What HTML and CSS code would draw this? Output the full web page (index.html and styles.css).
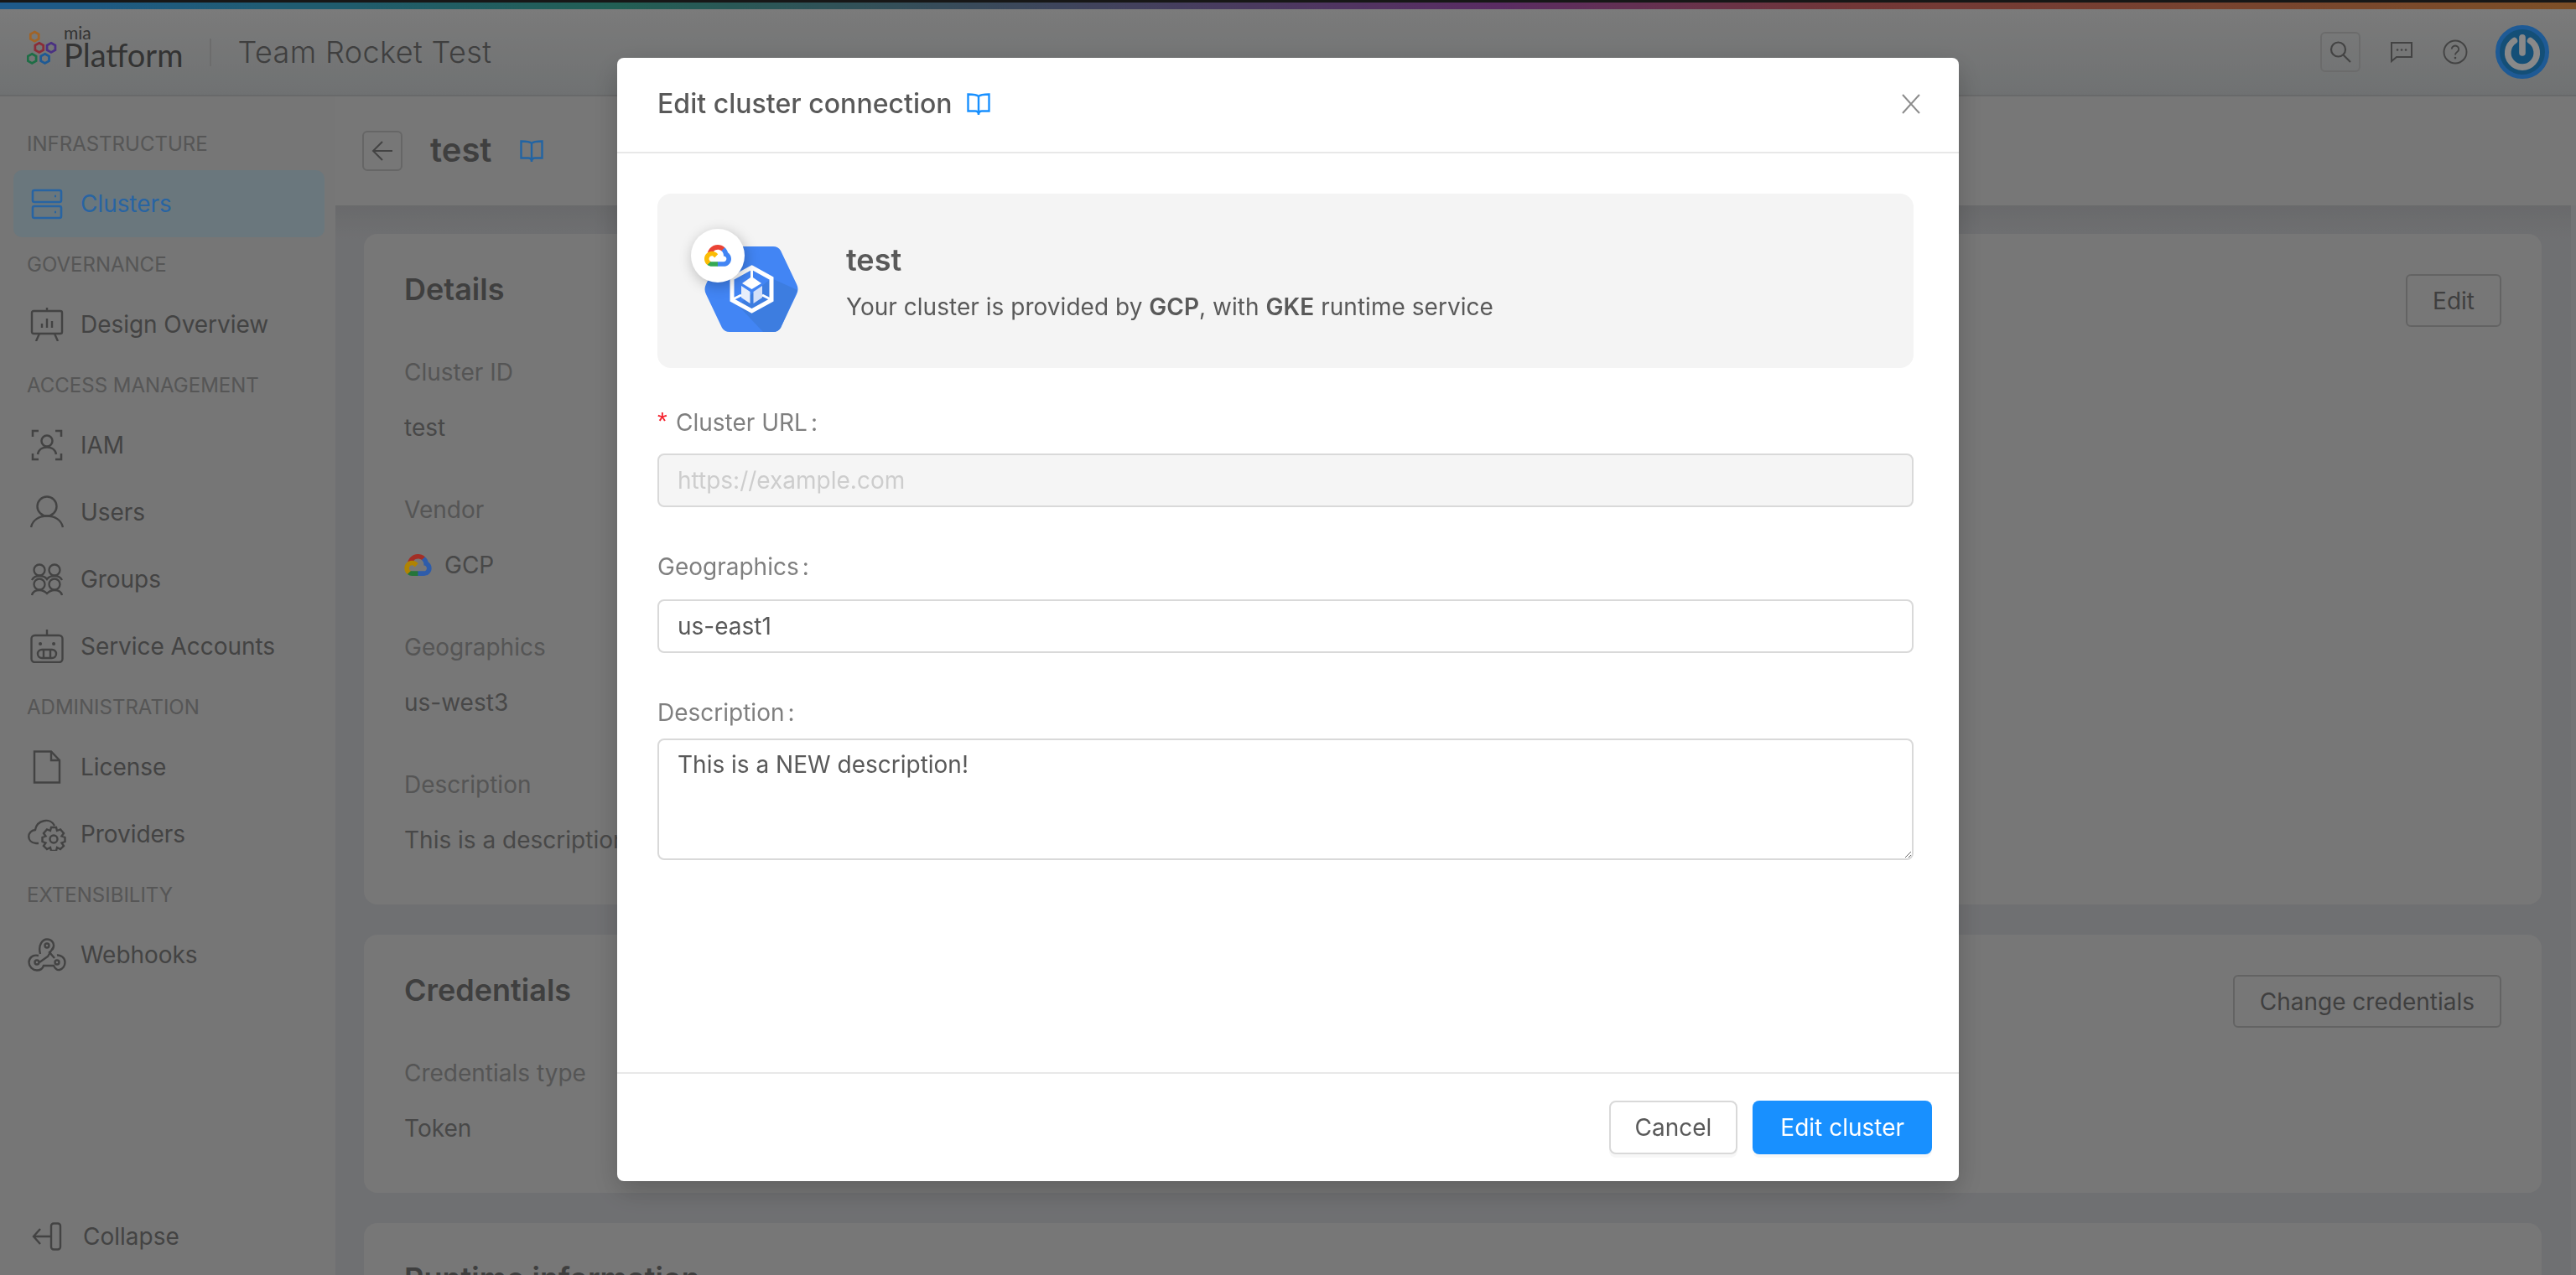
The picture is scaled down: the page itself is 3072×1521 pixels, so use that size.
FILE: index.html
```html
<!DOCTYPE html>
<html lang="en">
<head>
  <meta charset="UTF-8" />
  <title>Edit cluster connection</title>
  <link rel="stylesheet" href="styles.css">
</head>
<body>

  <div class="rainbow"></div>

  <!-- Top bar -->
  <header class="topbar">
    <div class="brand">
      <svg class="brand-hex" width="37" height="43" viewBox="0 0 60 66" fill="none" stroke-width="4.500">
        <path d="M15 1.500 L23 6 V15 L15 19.500 L7 15 V6 Z" stroke="#e58f39"/>
        <path d="M24 23 L32 27.500 V36.500 L24 41 L16 36.500 V27.500 Z" stroke="#c8404f"/>
        <path d="M47 23 L55 27.500 V36.500 L47 41 L39 36.500 V27.500 Z" stroke="#6b47ba"/>
        <path d="M10 44 L18 48.500 V57.500 L10 62 L2 57.500 V48.500 Z" stroke="#2b9d64"/>
        <path d="M35 44 L43 48.500 V57.500 L35 62 L27 57.500 V48.500 Z" stroke="#2b81d6"/>
      </svg>
      <div class="brand-name">
        <span class="brand-mia">mia</span>
        <span class="brand-platform">Platform</span>
      </div>
    </div>
    <span class="brand-sep"></span>
    <span class="company">Team Rocket Test</span>
    <div class="topbar-right">
      <button class="icon-btn">
        <svg width="28" height="28" viewBox="0 0 28 28" fill="none" stroke="#616161" stroke-width="2.200"><circle cx="11.500" cy="11" r="8.500"/><path d="M17.500 17.500 L26 26"/></svg>
      </button>
      <svg class="chat-ic" width="28" height="26" viewBox="0 0 28 26" fill="none" stroke="#616161" stroke-width="2"><path d="M2 2 H26 V19 H8 L2 24 Z"/><path d="M9 10.500 h.1 M14 10.500 h.1 M19 10.500 h.1" stroke-width="2.600" stroke-linecap="round"/></svg>
      <svg class="help-ic" width="30" height="30" viewBox="0 0 30 30" fill="none" stroke="#616161" stroke-width="1.900"><circle cx="15" cy="15" r="13.500"/><path d="M10.800 11.600 a4.200 4 0 1 1 6.400 3.400 c-1.500 1 -2.200 1.600 -2.200 3.400"/><path d="M15 22 v.1" stroke-width="2.600" stroke-linecap="round"/></svg>
      <div class="avatar">
        <svg width="46" height="46" viewBox="0 0 48 48" fill="none" stroke="#c4c4c4" stroke-width="8" stroke-linecap="round"><path d="M14 10 A18 18 0 1 0 34 10"/><path d="M24 6 V25"/></svg>
      </div>
    </div>
  </header>

  <div class="layout">

    <!-- Sidebar -->
    <aside class="sidebar">
      <div class="side-label">INFRASTRUCTURE</div>
      <a class="side-item active">
        <svg class="side-ic" viewBox="0 0 40 40" fill="none" stroke="currentColor" stroke-width="2.600"><rect x="3" y="4" width="34" height="14" rx="2"/><rect x="3" y="23" width="34" height="14" rx="2"/><path d="M29 11 h2 M29 30 h2"/></svg>
        Clusters
      </a>
      <div class="side-label">GOVERNANCE</div>
      <a class="side-item">
        <svg class="side-ic" viewBox="0 0 40 40" fill="none" stroke="currentColor" stroke-width="2.400"><path d="M20 0 V4"/><rect x="2" y="4" width="36" height="27" rx="2"/><path d="M14 24 v-5 M20 24 v-11 M26 24 v-8"/><path d="M11 31 L7 40 M29 31 L33 40"/></svg>
        Design Overview
      </a>
      <div class="side-label">ACCESS MANAGEMENT</div>
      <a class="side-item">
        <svg class="side-ic" viewBox="0 0 40 40" fill="none" stroke="currentColor" stroke-width="2.500"><path d="M3 10 V3 H10 M30 3 H37 V10 M3 30 V37 H10 M30 37 H37 V30"/><circle cx="20" cy="15" r="6.500"/><path d="M9 31 C10 25 15 22.500 20 22.500 S30 25 31 31"/></svg>
        IAM
      </a>
      <a class="side-item">
        <svg class="side-ic" viewBox="0 0 40 40" fill="none" stroke="currentColor" stroke-width="2.400"><circle cx="20" cy="13" r="11.500"/><path d="M1 38 C3 29 11 24.500 20 24.500 S37 29 39 38"/></svg>
        Users
      </a>
      <a class="side-item">
        <svg class="side-ic" viewBox="0 0 40 40" fill="none" stroke="currentColor" stroke-width="2.300"><circle cx="11" cy="9" r="6.500"/><circle cx="29" cy="9" r="6.500"/><path d="M2 21 C4 17 7 16 11 16 C15 16 18 17 20 20 C22 17 25 16 29 16 C33 16 36 17 38 21"/><circle cx="11" cy="26" r="6.500"/><circle cx="29" cy="26" r="6.500"/><path d="M2 39 C3 35 7 33 11 33 C15 33 18 35 20 37 C22 35 25 33 29 33 C33 33 37 35 38 39"/></svg>
        Groups
      </a>
      <a class="side-item">
        <svg class="side-ic" viewBox="0 0 40 40" fill="none" stroke="currentColor" stroke-width="2.400"><path d="M20 0 V7"/><rect x="1.500" y="7" width="37" height="32" rx="4"/><path d="M12 17 h.1 M28 17 h.1" stroke-width="4" stroke-linecap="round"/><rect x="9" y="24" width="22" height="10" rx="5"/><path d="M16 24 V34 M24 24 V34"/></svg>
        Service Accounts
      </a>
      <div class="side-label">ADMINISTRATION</div>
      <a class="side-item">
        <svg class="side-ic" viewBox="0 0 40 40" fill="none" stroke="currentColor" stroke-width="2.400"><path d="M5 1.500 H25 L35 12 V38.500 H5 Z"/><path d="M25 1.500 V12 H35"/></svg>
        License
      </a>
      <a class="side-item">
        <svg class="side-ic wide" viewBox="0 0 46 40" fill="none" stroke="currentColor" stroke-width="2.400"><path d="M13 31 H10 C-2 30 -1 16 9 15 C11 3 27 0 32 10"/><circle cx="31" cy="26" r="4.500"/><path d="M28 12 H34 L35 16 L39 14.500 L43 19 L40.500 22.500 L44.500 24 V29 L40.500 30.500 L43 34 L39 38 L35 36 L34 40 H28 L27 36 L23 38 L19 34 L21.500 30.500 L17.500 29 V24 L21.500 22.500 L19 19 L23 14.500 L27 16 Z"/></svg>
        Providers
      </a>
      <div class="side-label">EXTENSIBILITY</div>
      <a class="side-item">
        <svg class="side-ic wide" viewBox="0 0 46 40" fill="none" stroke="currentColor" stroke-width="2.400"><circle cx="23" cy="9" r="2.500"/><circle cx="11" cy="29" r="2.500"/><circle cx="35" cy="29" r="2.500"/><path d="M15 19 C12 8 18 1.500 23 1.500 C29 1.500 33 7 30 13 L26 17 L32 24 M31 10 L24 22 L14 29 M13 21 C5 19 1.500 25 1.500 29 C1.500 34 6 38.500 11 38.500 C15 38.500 18 36 19 33 H31 C33 37 36 38.500 38 38 C42 37 44.500 33 44.500 29 C44.500 24 40 20 35 20.500"/></svg>
        Webhooks
      </a>
      <a class="collapse">
        <svg class="collapse-ic" width="36" height="34" viewBox="0 0 36 34" fill="none" stroke="currentColor" stroke-width="2.400"><path d="M22 17 H2 M10 8 L2 17 L10 26"/><rect x="23" y="1.500" width="11" height="31" rx="3"/></svg>
        Collapse
      </a>
    </aside>

    <!-- Page -->
    <main class="page">
      <div class="page-head">
        <button class="back-btn">
          <svg width="26" height="26" viewBox="0 0 26 26" fill="none" stroke="#616161" stroke-width="2"><path d="M25 13 H2 M13 2 L2 13 L13 24"/></svg>
        </button>
        <h1 class="page-title">test</h1>
        <svg class="book-ic dim" width="28" height="26" viewBox="0 0 28 26" fill="none" stroke="currentColor" stroke-width="2.400"><path d="M14 4 C12 2 8 1.500 1.500 1.500 V21.500 H10 C12 21.500 14 22.500 14 26 C14 22.500 16 21.500 18 21.500 H26.500 V1.500 C20 1.500 16 2 14 4 Z M14 4 V24"/></svg>
      </div>

      <div class="page-body">
        <section class="card details">
          <div class="card-head">
            <h2>Details</h2>
            <button class="btn-outline">Edit</button>
          </div>
          <div class="field"><span class="field-key">Cluster ID</span><span class="field-val">test</span></div>
          <div class="field"><span class="field-key">Vendor</span>
            <span class="field-val vendor">
              <svg width="33" height="26" viewBox="0 0 256 206"><path d="M170.250 56.820 L192.500 34.570 L193.990 25.200 C153.440 -11.680 88.980 -7.500 52.420 33.920 C42.270 45.420 34.730 59.760 30.720 74.570 L38.690 73.450 L83.190 66.110 L86.630 62.600 C106.420 40.850 139.900 37.930 162.760 56.430 Z" fill="#ea4335"/><path d="M224.200 73.920 C219.090 55.080 208.590 38.150 193.990 25.200 L162.760 56.430 C175.940 67.200 183.460 83.440 183.130 100.470 V106.010 C198.490 106.010 210.930 118.450 210.930 133.810 C210.930 149.160 198.490 161.290 183.130 161.290 H127.460 L122 167.220 V200.560 L127.460 205.800 H183.130 C223.060 206.110 255.690 174.300 256 134.370 C256.190 110.170 244.250 87.480 224.200 73.920" fill="#4285f4"/><path d="M71.870 205.800 H127.460 V161.290 H71.870 C67.910 161.290 64.070 160.440 60.470 158.790 L52.580 161.210 L30.180 183.460 L28.220 191.040 C40.790 200.530 56.120 205.860 71.870 205.800" fill="#34a853"/><path d="M71.870 61.430 C31.940 61.660 -0.240 94.230 0 134.160 C0.130 156.460 10.550 177.450 28.220 191.040 L60.470 158.790 C46.480 152.470 40.260 136 46.580 122.010 C52.900 108.020 69.370 101.810 83.360 108.130 C89.530 110.910 94.460 115.850 97.250 122.010 L129.490 89.770 C115.770 71.830 94.450 61.340 71.870 61.430" fill="#fbbc05"/></svg>
              GCP
            </span>
          </div>
          <div class="field"><span class="field-key">Geographics</span><span class="field-val">us-west3</span></div>
          <div class="field"><span class="field-key">Description</span><span class="field-val">This is a description</span></div>
        </section>

        <section class="card creds">
          <div class="card-head">
            <h2>Credentials</h2>
            <button class="btn-outline">Change credentials</button>
          </div>
          <div class="field"><span class="field-key">Credentials type</span><span class="field-val">Token</span></div>
        </section>

        <section class="card runtime">
          <div class="card-head"><h2>Runtime information</h2></div>
        </section>
      </div>
    </main>
  </div>

  <!-- Modal -->
  <div class="mask"></div>
  <div class="modal">
    <div class="modal-head">
      <span class="modal-title">Edit cluster connection</span>
      <svg class="book-ic" width="28" height="26" viewBox="0 0 28 26" fill="none" stroke="currentColor" stroke-width="2.400"><path d="M14 4 C12 2 8 1.500 1.500 1.500 V21.500 H10 C12 21.500 14 22.500 14 26 C14 22.500 16 21.500 18 21.500 H26.500 V1.500 C20 1.500 16 2 14 4 Z M14 4 V24"/></svg>
      <svg class="close-ic" width="24" height="24" viewBox="0 0 24 24" stroke="#8c8c8c" stroke-width="2"><path d="M2 1 L22 23 M22 1 L2 23"/></svg>
    </div>

    <div class="modal-body">
      <div class="info-box">
        <div class="info-pic">
          <svg class="hex" width="112" height="102" viewBox="0 0 112 102">
            <path d="M30 0 H82 Q88 0 91 5 L110 45 Q113 51 110 57 L91 97 Q88 102 82 102 H30 Q24 102 21 97 L2 57 Q-1 51 2 45 L21 5 Q24 0 30 0 Z" fill="#4285f4"/>
            <path d="M80 38 L111 52 L91 97 Q88 102 82 102 L70 102 L40 70 Z" fill="#3d7de0"/>
            <path d="M56.500 25 L80 38 V64 L56.500 77 L33 64 V38 Z" fill="none" stroke="#fff" stroke-width="5"/>
            <path d="M56.500 26 V37 M34 63 L44 58 M79 63 L69 58" stroke="#fff" stroke-width="3"/>
            <path d="M56.500 36 L68 44 L56.500 51 L45 44 Z" fill="#fff"/>
            <path d="M44 47 L54.500 54 V68 L44 61 Z" fill="#e8eefb"/>
            <path d="M69 47 L58.500 54 V68 L69 61 Z" fill="#d4e0f8"/>
          </svg>
          <div class="vendor-badge">
            <svg width="32" height="26" viewBox="0 0 256 206"><path d="M170.250 56.820 L192.500 34.570 L193.990 25.200 C153.440 -11.680 88.980 -7.500 52.420 33.920 C42.270 45.420 34.730 59.760 30.720 74.570 L38.690 73.450 L83.190 66.110 L86.630 62.600 C106.420 40.850 139.900 37.930 162.760 56.430 Z" fill="#ea4335"/><path d="M224.200 73.920 C219.090 55.080 208.590 38.150 193.990 25.200 L162.760 56.430 C175.940 67.200 183.460 83.440 183.130 100.470 V106.010 C198.490 106.010 210.930 118.450 210.930 133.810 C210.930 149.160 198.490 161.290 183.130 161.290 H127.460 L122 167.220 V200.560 L127.460 205.800 H183.130 C223.060 206.110 255.690 174.300 256 134.370 C256.190 110.170 244.250 87.480 224.200 73.920" fill="#4285f4"/><path d="M71.870 205.800 H127.460 V161.290 H71.870 C67.910 161.290 64.070 160.440 60.470 158.790 L52.580 161.210 L30.180 183.460 L28.220 191.040 C40.790 200.530 56.120 205.860 71.870 205.800" fill="#34a853"/><path d="M71.870 61.430 C31.940 61.660 -0.240 94.230 0 134.160 C0.130 156.460 10.550 177.450 28.220 191.040 L60.470 158.790 C46.480 152.470 40.260 136 46.580 122.010 C52.900 108.020 69.370 101.810 83.360 108.130 C89.530 110.910 94.460 115.850 97.250 122.010 L129.490 89.770 C115.770 71.830 94.450 61.340 71.870 61.430" fill="#fbbc05"/></svg>
          </div>
        </div>
        <div class="info-text">
          <div class="info-name">test</div>
          <div class="info-sub">Your cluster is provided by <b>GCP</b>, with <b>GKE</b> runtime service</div>
        </div>
      </div>

      <form class="form">
        <label class="form-label url-label"><span class="req">*</span>Cluster URL<span class="colon">:</span></label>
        <input class="input" type="text" placeholder="https://example.com" disabled />
        <label class="form-label geo-label">Geographics<span class="colon">:</span></label>
        <input class="input" type="text" value="us-east1" />
        <label class="form-label desc-label">Description<span class="colon">:</span></label>
        <textarea class="input area">This is a NEW description!</textarea>
      </form>
    </div>

    <div class="modal-foot">
      <button class="btn-cancel">Cancel</button>
      <button class="btn-primary">Edit cluster</button>
    </div>
  </div>

</body>
</html>
```

FILE: styles.css
```css
* {
  box-sizing: border-box;
}

html, body {
  height: 100%;
}

body {
  margin: 0;
  overflow: hidden;
  font-family: Inter, "Noto Sans", sans-serif;
  font-size: 28px;
  color: #676767;
  background-color: #a9a9a9;
}

button {
  font-family: inherit;
}

.rainbow {
  height: 11px;
  border-top: 3px solid #222;
  background: linear-gradient(90deg, #2b81c8, #328879 24%, #81408f 58%, #a44f4f 72%, #b37239);
}

.topbar {
  height: 104px;
  display: flex;
  align-items: center;
  padding: 0 32px;
  background: linear-gradient(#b0b0b0, #a0a3a4);
  border-bottom: 2px solid #969798;
}

.brand {
  display: flex;
  align-items: center;
  gap: 7px;
  margin-bottom: 9px;
}

.brand-name {
  display: flex;
  flex-direction: column;
  padding-bottom: 5px;
  color: #4a4a4a;
  font-family: Lato, sans-serif;
}

.brand-mia {
  font-size: 21px;
  line-height: 17px;
  margin-bottom: 3px;
}

.brand-platform {
  font-size: 38px;
  line-height: 30px;
}

.brand-sep {
  width: 2px;
  height: 33px;
  margin: 0 31px 0 32px;
  background-color: #9b9b9b;
}

.company {
  font-size: 36px;
  font-weight: 300;
  letter-spacing: 0.4px;
  color: #5b5b5b;
}

.topbar-right {
  margin-left: auto;
  display: flex;
  align-items: center;
}

.icon-btn {
  width: 48px;
  height: 48px;
  padding: 0;
  margin-right: 35px;
  display: flex;
  align-items: center;
  justify-content: center;
  background: none;
  border: 2px solid #9a9a9a;
  border-radius: 6px;
}

.chat-ic {
  margin-right: 35px;
}

.help-ic {
  margin-right: 33px;
}

.avatar {
  width: 64px;
  height: 64px;
  display: flex;
  align-items: center;
  justify-content: center;
  border-radius: 50%;
  background-color: #1d72ab;
  border: 5px solid #2b81d6;
}

.layout {
  display: flex;
  height: calc(100% - 115px);
}

.sidebar {
  position: relative;
  width: 400px;
  flex-shrink: 0;
  padding-top: 24px;
  background-color: #a9a9a9;
}

.side-label {
  height: 64px;
  display: flex;
  align-items: center;
  padding-left: 32px;
  font-size: 24px;
  color: #7b7b7b;
}

.side-item {
  height: 80px;
  margin: 0 13px 0 16px;
  display: flex;
  align-items: center;
  padding-left: 20px;
  gap: 20px;
  border-radius: 10px;
  letter-spacing: -0.05px;
  color: #616161;
}

.side-item.active {
  background-color: #99abb3;
  color: #3a90e8;
}

.side-ic {
  width: 40px;
  height: 40px;
  flex-shrink: 0;
}

.side-ic.wide {
  width: 46px;
  margin-left: -3px;
  margin-right: -3px;
}

.collapse {
  position: absolute;
  left: 38px;
  bottom: 29px;
  display: flex;
  align-items: center;
  gap: 25px;
  color: #616161;
}

.page {
  flex: 1;
  min-width: 0;
  display: flex;
  flex-direction: column;
}

.page-head {
  height: 130px;
  flex-shrink: 0;
  display: flex;
  align-items: center;
  padding-left: 32px;
  background-color: #ababab;
}

.back-btn {
  width: 48px;
  height: 48px;
  padding: 0;
  display: flex;
  align-items: center;
  justify-content: center;
  background: none;
  border: 2px solid #929292;
  border-radius: 6px;
}

.page-title {
  margin: -3px 34px 0 33px;
  font-size: 40px;
  font-weight: 600;
  color: #5b5b5b;
}

.book-ic {
  color: #1890ff;
  flex-shrink: 0;
}

.book-ic.dim {
  color: #3290ea;
}

.page-body {
  flex: 1;
  padding: 34px 35px 0 34px;
  overflow: hidden;
  background: linear-gradient(#97989a, #a0a1a4 40px);
  border-right: 6px solid #a6a7aa;
}

.card {
  margin-bottom: 36px;
  padding: 0 48px;
  border-radius: 16px;
  background-color: #ababab;
}

.details {
  height: 800px;
}

.creds {
  height: 308px;
}

.card-head {
  display: flex;
  align-items: center;
  justify-content: space-between;
  height: 112px;
  padding-top: 20px;
  margin-bottom: 20px;
}

.card-head h2 {
  margin: 0;
  font-size: 36px;
  font-weight: 600;
  color: #5b5b5b;
}

.btn-outline {
  align-self: flex-end;
  height: 63px;
  margin-bottom: 1px;
  padding: 0 30px;
  background: none;
  border: 2px solid #8f8f8f;
  border-radius: 6px;
  font-size: 28px;
  color: #5b5b5b;
}

.field {
  display: flex;
  flex-direction: column;
  height: 164px;
}

.field-key {
  height: 66px;
  line-height: 66px;
  color: #7a7a7a;
}

.field-val {
  height: 66px;
  line-height: 66px;
  color: #676767;
}

.vendor {
  display: flex;
  align-items: center;
  gap: 15px;
}

/* overlay */
.mask {
  position: fixed;
  top: 0;
  left: 0;
  right: 0;
  bottom: 0;
  background-color: rgba(0, 0, 0, 0.3);
}

.modal {
  position: fixed;
  top: 69px;
  left: 736px;
  width: 1600px;
  height: 1340px;
  display: flex;
  flex-direction: column;
  background-color: #fff;
  border-radius: 8px;
  box-shadow: 0 12px 32px rgba(0, 0, 0, 0.2);
  color: #595959;
}

.modal-head {
  height: 114px;
  flex-shrink: 0;
  display: flex;
  align-items: center;
  padding: 0 32px 2px 48px;
  border-bottom: 2px solid #e8e8e8;
}

.modal-title {
  font-size: 32px;
  font-weight: 500;
  margin-right: 17px;
  margin-top: -2px;
  letter-spacing: 0.03px;
}

.close-ic {
  margin-left: auto;
  margin-right: 13px;
}

.modal-body {
  flex: 1;
  padding: 48px 54px 0 48px;
}

.info-box {
  height: 208px;
  display: flex;
  align-items: center;
  padding-left: 40px;
  border-radius: 16px;
  background-color: #f4f4f4;
}

.info-pic {
  position: relative;
  width: 128px;
  height: 122px;
  margin-right: 57px;
  margin-top: -2px;
  padding: 21px 0 0 16px;
}

.hex {
  display: block;
}

.vendor-badge {
  position: absolute;
  left: 0;
  top: 0;
  width: 64px;
  height: 64px;
  display: flex;
  align-items: center;
  justify-content: center;
  border-radius: 50%;
  background-color: #fff;
  box-shadow: 2px 4px 16px rgba(0, 0, 0, 0.25);
}

.info-name {
  font-size: 36px;
  font-weight: 600;
  margin-bottom: 16px;
  color: #595959;
}

.info-sub {
  padding-top: 1px;
  letter-spacing: 0.03px;
}

.info-sub b {
  font-weight: 600;
}

.form {
  display: flex;
  flex-direction: column;
}

.form-label {
  height: 40px;
  display: flex;
  align-items: center;
  color: #7f7f7f;
}

.url-label {
  margin-top: 45px;
  margin-bottom: 17px;
}

.geo-label {
  margin-top: 51px;
  margin-bottom: 19px;
}

.desc-label {
  margin-top: 51px;
  margin-bottom: 11px;
}

.req {
  width: 22px;
  height: 40px;
  line-height: 40px;
  margin-top: -4px;
  font-family: "Liberation Sans", sans-serif;
  font-size: 30px;
  color: #f5222d;
}

.colon {
  margin-left: 4px;
}

.input {
  height: 64px;
  width: 100%;
  padding: 0 22px;
  font-family: inherit;
  font-size: 28px;
  color: #595959;
  background-color: #fff;
  border: 2px solid #d9d9d9;
  border-radius: 8px;
}

.input::placeholder {
  color: #cdcdcd;
}

.input:disabled {
  background-color: #f5f5f5;
}

.area {
  height: 145px;
  padding: 12px 22px;
  line-height: 34px;
  display: block;
}

.modal-foot {
  height: 130px;
  flex-shrink: 0;
  display: flex;
  align-items: flex-start;
  justify-content: flex-end;
  gap: 18px;
  padding: 32px 32px 0 0;
  border-top: 2px solid #e8e8e8;
}

.btn-cancel, .btn-primary {
  height: 64px;
  font-size: 28px;
  border-radius: 8px;
  box-shadow: 0 4px 0 rgba(0, 0, 0, 0.03);
}

.btn-cancel {
  padding: 0 29px;
  color: #595959;
  background-color: #fff;
  border: 2px solid #d9d9d9;
}

.btn-primary {
  padding: 0 33px;
  color: #fff;
  background-color: #1890ff;
  border: none;
}
```
